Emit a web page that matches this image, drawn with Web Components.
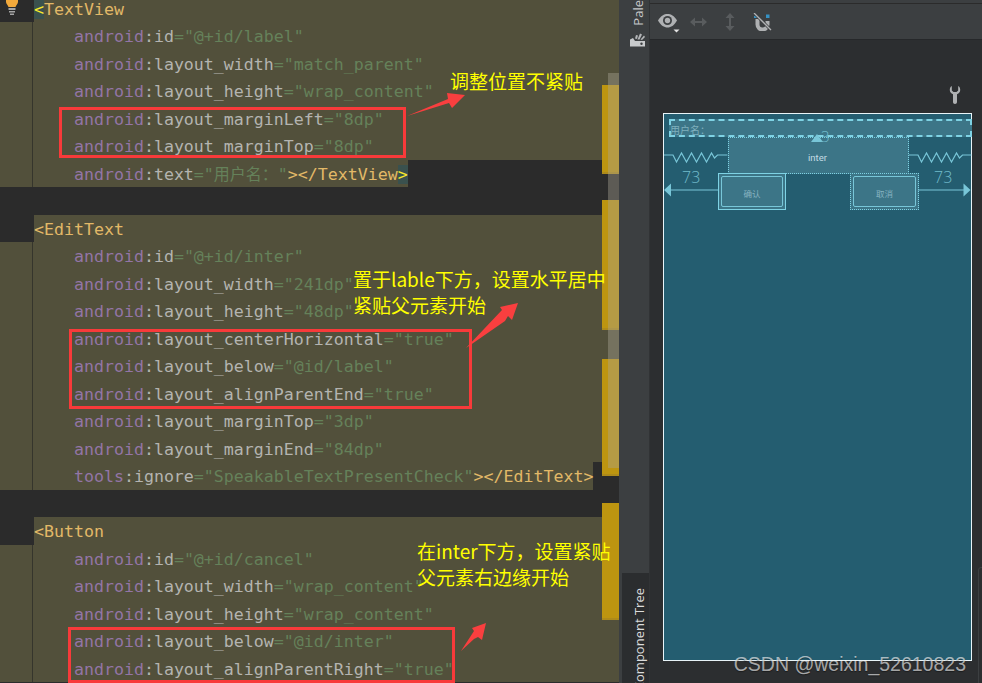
<!DOCTYPE html>
<html lang="zh">
<head>
<meta charset="utf-8">
<title>layout editor</title>
<style>
  html, body { margin: 0; height: 100%; background: #2b2b2b; overflow: hidden; }
</style>
</head>
<body>
<app-shell>
  <code-editor>
    <tag-line name="TextView" match></tag-line>
    <code-line ns="android" name="id" value="@+id/label"></code-line>
    <code-line ns="android" name="layout_width" value="match_parent"></code-line>
    <code-line ns="android" name="layout_height" value="wrap_content"></code-line>
    <code-line ns="android" name="layout_marginLeft" value="8dp"></code-line>
    <code-line ns="android" name="layout_marginTop" value="8dp"></code-line>
    <code-line ns="android" name="text" value="用户名&#xFF1A;" close="TextView" match></code-line>
    <blank-line></blank-line>
    <tag-line name="EditText"></tag-line>
    <code-line ns="android" name="id" value="@+id/inter"></code-line>
    <code-line ns="android" name="layout_width" value="241dp"></code-line>
    <code-line ns="android" name="layout_height" value="48dp"></code-line>
    <code-line ns="android" name="layout_centerHorizontal" value="true"></code-line>
    <code-line ns="android" name="layout_below" value="@id/label"></code-line>
    <code-line ns="android" name="layout_alignParentEnd" value="true"></code-line>
    <code-line ns="android" name="layout_marginTop" value="3dp"></code-line>
    <code-line ns="android" name="layout_marginEnd" value="84dp"></code-line>
    <code-line ns="tools" name="ignore" value="SpeakableTextPresentCheck" close="EditText"></code-line>
    <blank-line></blank-line>
    <tag-line name="Button"></tag-line>
    <code-line ns="android" name="id" value="@+id/cancel"></code-line>
    <code-line ns="android" name="layout_width" value="wrap_content"></code-line>
    <code-line ns="android" name="layout_height" value="wrap_content"></code-line>
    <code-line ns="android" name="layout_below" value="@id/inter"></code-line>
    <code-line ns="android" name="layout_alignParentRight" value="true"></code-line>
  </code-editor>
  <tool-strip></tool-strip>
  <design-panel></design-panel>
  <call-outs></call-outs>
</app-shell>

<script>
  const rowCss = `
    :host {
      display: flex;
      height: 27.5px;
      font: 16.6px/30.5px "DejaVu Sans Mono", "Liberation Mono", monospace;
      white-space: pre;
      color: #b4b4b0;
    }
    .gutter { flex: 0 0 34px; box-sizing: border-box; }
    .gutter.lit { background: #52503b; position: relative; }
    .gutter.lit::after {
      content: ""; position: absolute; left: 32px; top: 0; bottom: 0; width: 1px; background: #35352c;
    }
    .code { flex: 1; background: #52503b; min-width: 0; }
    .code.fit { flex: none; }
    .ns { color: #9275a6; }
    .str { color: #65815a; }
    .tag { color: #e2b968; }
    .match { color: #f7e82c; background: #3a514e; }
    .cjk { font: 16px "Noto Sans CJK SC", sans-serif; }
  `;

  class TagLine extends HTMLElement {
    connectedCallback() {
      const open = this.hasAttribute('match')
        ? '<span class="match">&lt;</span>'
        : '<span class="tag">&lt;</span>';
      this.attachShadow({ mode: 'open' }).innerHTML = `
        <style>${rowCss}</style>
        <div class="gutter"></div>
        <div class="code">${open}<span class="tag">${this.getAttribute('name')}</span></div>`;
    }
  }
  customElements.define('tag-line', TagLine);

  class CodeLine extends HTMLElement {
    connectedCallback() {
      const value = this.getAttribute('value').replace(/[^\x00-\x7f]+/g, m => `<span class="cjk">${m}</span>`);
      const close = this.getAttribute('close');
      let tail = '';
      if (close) {
        tail = this.hasAttribute('match')
          ? `<span class="tag">&gt;&lt;/${close}</span><span class="match">&gt;</span>`
          : `<span class="tag">&gt;&lt;/${close}&gt;</span>`;
      }
      this.attachShadow({ mode: 'open' }).innerHTML = `
        <style>${rowCss}</style>
        <div class="gutter lit"></div>
        <div class="code ${close ? 'fit' : ''}">${'    '}<span class="ns">${this.getAttribute('ns')}</span>:${this.getAttribute('name')}<span class="str">="${value}"</span>${tail}</div>`;
    }
  }
  customElements.define('code-line', CodeLine);

  class BlankLine extends HTMLElement {
    constructor() {
      super();
      this.attachShadow({ mode: 'open' }).innerHTML = `<style>:host { display: block; height: 27.5px; }</style>`;
    }
  }
  customElements.define('blank-line', BlankLine);

  class ScrollMarks extends HTMLElement {
    constructor() {
      super();
      this.attachShadow({ mode: 'open' }).innerHTML = `
        <style>
          :host { position: absolute; left: 602px; top: 0; width: 17px; height: 683px; display: block; }
          .mark { position: absolute; left: 0; right: 0; background: #bd9510; box-shadow: inset 0 -2px 0 #ad8a1a; }
          .thumb { position: absolute; left: 6px; right: 0; top: 73px; height: 395px; background: rgba(170, 165, 150, .4); }
        </style>
        <div class="mark" style="top:85px;height:89px"></div>
        <div class="mark" style="top:200px;height:130px"></div>
        <div class="mark" style="top:359px;height:117px"></div>
        <div class="mark" style="top:503px;height:117px"></div>
        <div class="thumb"></div>`;
    }
  }
  customElements.define('scroll-marks', ScrollMarks);

  class CodeEditor extends HTMLElement {
    constructor() {
      super();
      this.attachShadow({ mode: 'open' }).innerHTML = `
        <style>
          :host { display: block; flex: 0 0 619px; position: relative; overflow: hidden; background: #2b2b2b; }
          .lines { display: flex; flex-direction: column; margin-top: -5.5px; }
        </style>
        <div class="lines"><slot></slot></div>
        <scroll-marks></scroll-marks>
        <svg width="24" height="18" viewBox="0 0 24 18" style="position:absolute;left:0;top:0">
          <path d="M6 -3h12v5c0 2-2 3-2.500 5h-7c-.5-2-2.500-3-2.500-5z" fill="#f2a93b"/>
          <path d="M8.500 8h7v2h-7zM9 11h6v1.500H9zM10 13.500h4V15h-4z" fill="#a5a5a5"/>
        </svg>`;
    }
  }
  customElements.define('code-editor', CodeEditor);

  class ToolStrip extends HTMLElement {
    constructor() {
      super();
      this.attachShadow({ mode: 'open' }).innerHTML = `
        <style>
          :host {
            display: flex; flex-direction: column; justify-content: space-between;
            flex: 0 0 31px; width: 31px; min-width: 0; box-sizing: border-box; background: #3c3f41; border-right: 1px solid #313335;
            font: 13px "Open Sans", "Liberation Sans", sans-serif; color: #c4c6c8;
          }
          .side { writing-mode: vertical-rl; transform: rotate(180deg); line-height: 14px; white-space: nowrap; }
          .palette { display: flex; flex-direction: column; align-items: center; padding-left: 7px; }
          .palette .clip { height: 26px; overflow: hidden; display: flex; align-items: flex-start; }
          .palette svg { margin-top: 6px; }
          .tree { margin-left: 3px; height: 110px; background: #2b2d2f; overflow: hidden; padding: 15px 0 0 10px; box-sizing: border-box; }
          .tree .side { display: block; color: #dcdcdc; }
        </style>
        <div class="palette">
          <div class="clip"><span class="side">Pale</span></div>
          <svg width="15" height="15" viewBox="0 0 15 15">
            <path d="M0 7.500l3-1.500 2 3h10v5.500H0z" fill="#c8cacc"/>
            <path d="M5 6.500L6 3l2 .6-1 3.400zM7.500 7.500L10 1.500l2 1-2.500 5zM10.500 7.500L14 3.500l1 1.500-3 3z" fill="#b4b6b8"/>
            <circle cx="11.500" cy="11.800" r="1.200" fill="#3c3f41"/>
          </svg>
        </div>
        <div class="tree"><span class="side">Component Tree</span></div>`;
    }
  }
  customElements.define('tool-strip', ToolStrip);

  class DesignToolbar extends HTMLElement {
    constructor() {
      super();
      this.attachShadow({ mode: 'open' }).innerHTML = `
        <style>
          :host {
            display: flex; align-items: center; gap: 14px; height: 35px; margin-top: 3px; padding-left: 8px;
            background: #3c3f41; border-top: 1px solid #2b2b2b; border-bottom: 1px solid #26282a;
            box-shadow: 0 -3px 0 #3c3f41;
          }
          svg { display: block; flex: none; }
        </style>
        <svg width="24" height="22" viewBox="0 0 24 22">
          <path d="M0 9.500C3 4.500 6 3 9.500 3S16 4.500 19 9.500C16 14.500 13 16.500 9.500 16.500S3 14.500 0 9.500z" fill="#afb1b3"/>
          <circle cx="9.500" cy="9.500" r="4.500" fill="#3c3f41"/>
          <circle cx="9.500" cy="9.500" r="2.700" fill="#afb1b3"/>
          <path d="M15.500 18.500h6l-3 3z" fill="#e4e4e4"/>
        </svg>
        <svg style="margin-left:-6px" width="17" height="10" viewBox="0 0 17 10">
          <path d="M0 5l5-4.500V4h7V.5L17 5l-5 4.500V6H5v3.500z" fill="#595c5e"/>
        </svg>
        <svg style="margin-left:4px" width="10" height="18" viewBox="0 0 10 18">
          <path d="M5 0l4.500 5H6v8h3.500L5 18 .5 13H4V5H.5z" fill="#595c5e"/>
        </svg>
        <svg style="margin-left:4px" width="19" height="18" viewBox="0 0 19 18">
          <path d="M4.500 6v5.500a5 5 0 0 0 10 0V8" fill="none" stroke="#afb1b3" stroke-width="4"/>
          <rect x="13" y="1.500" width="3.500" height="3.500" fill="#3592c4"/>
          <rect x="1" y="3" width="3" height="2" fill="#3592c4"/>
          <path d="M1 0l17 17" stroke="#3c3f41" stroke-width="3"/>
          <path d="M1 0l17 17" stroke="#b0b2b4" stroke-width="1.300"/>
        </svg>`;
    }
  }
  customElements.define('design-toolbar', DesignToolbar);

  class BlueprintWidget extends HTMLElement {
    constructor() {
      super();
      this.attachShadow({ mode: 'open' }).innerHTML = `
        <style>
          :host {
            position: absolute; display: flex; align-items: center; box-sizing: border-box;
            background: #3c7587; border: 1px dotted #7ed2e4;
            justify-content: center; color: #c3dce4; font: 9.5px "Roboto", "Noto Sans CJK SC", sans-serif;
          }
          :host([solid]), :host([framed]) { padding: 2px; }
          :host([solid]) { border-style: solid; }
          :host([wide]) { border: 2px dashed #7ed2e4; }
          .inner { display: flex; align-items: center; justify-content: center; flex: 1; align-self: stretch; padding: 3px 2px 0 0; }
          :host([solid]) .inner, :host([framed]) .inner {
            border: 1px solid #78c6d8; border-radius: 2px; color: #86b3c1; font-size: 8.5px; padding: 2px 0 0;
          }
        </style>
        <div class="inner"><slot></slot></div>`;
    }
  }
  customElements.define('blueprint-widget', BlueprintWidget);

  class BlueprintView extends HTMLElement {
    constructor() {
      super();
      this.attachShadow({ mode: 'open' }).innerHTML = `
        <style>
          :host {
            display: block; position: absolute; left: 13px; top: 113px; width: 309px; height: 548px;
            box-sizing: border-box; border: 1px solid #e8f4f8; background: #245d70;
          }
          svg { position: absolute; left: -1px; top: -1px; overflow: visible; }
          text { font: 300 16px "Open Sans", "Liberation Sans", sans-serif; fill: #72bccc; }
          .label-text {
            position: absolute; left: 6px; top: 8px; font: 10px "Noto Sans CJK SC", sans-serif; color: #7fb0bd;
          }
        </style>
        <blueprint-widget wide style="left:5px;top:5px;width:303px;height:18px"></blueprint-widget>
        <span class="label-text">用户名&#xFF1A;</span>
        <blueprint-widget style="left:64px;top:23px;width:181px;height:37px">inter</blueprint-widget>
        <blueprint-widget solid style="left:54px;top:59px;width:68px;height:37px">确认</blueprint-widget>
        <blueprint-widget framed style="left:186px;top:59px;width:69px;height:37px">取消</blueprint-widget>
        <svg width="309" height="548" viewBox="0 0 309 548" fill="none" stroke="#78c6d8" stroke-width="1.200">
          <path d="M1 42h9l3.500 7 5-9 5 9 5-9 5 9 5-9 5 9 5-9 3 5 3-3h10"/>
          <path d="M246 42h9l3.500 7 5-9 5 9 5-9 5 9 5-9 5 9 5-9 3 5 3-3h9"/>
          <path d="M8 77h47M255 77h46"/>
          <path d="M1 77l7-6.500v13zM307.500 77l-7-6.500v13z" fill="#78c6d8" stroke="none"/>
          <path d="M154 21l6 8h-12z" fill="#78c6d8" stroke="none"/>
          <text x="19" y="70" stroke="none">73</text>
          <text x="271" y="70" stroke="none">73</text>
          <text x="158" y="29" stroke="none" style="font-size:15px">3</text>
        </svg>`;
    }
  }
  customElements.define('blueprint-view', BlueprintView);

  class DesignPanel extends HTMLElement {
    constructor() {
      super();
      this.attachShadow({ mode: 'open' }).innerHTML = `
        <style>
          :host { display: block; flex: 1; position: relative; background: #2c2e30; overflow: hidden; }
          .wrench { position: absolute; left: 299px; top: 86px; }
          .edge {
            position: absolute; left: 328px; top: 567px; width: 10px; height: 130px;
            border: 1px solid #3c3f41; border-radius: 3px; box-sizing: border-box;
          }
        </style>
        <design-toolbar></design-toolbar>
        <svg class="wrench" width="12" height="18" viewBox="0 0 12 18">
          <path d="M2.800 0C1.200 1 .8 2.500.8 4c0 2 1.200 3.500 3.200 4.200V16c0 1 .8 2 2 2s2-1 2-2V8.200c2-.7 3.200-2.200 3.200-4.200 0-1.500-.4-3-2-4v4.500L7.500 6h-3L2.800 4.500z" fill="#afb1b3"/>
        </svg>
        <blueprint-view></blueprint-view>
        <div class="edge"></div>`;
    }
  }
  customElements.define('design-panel', DesignPanel);

  class NoteLabel extends HTMLElement {
    constructor() {
      super();
      this.attachShadow({ mode: 'open' }).innerHTML = `
        <style>
          :host {
            position: absolute; display: block; white-space: nowrap;
            font: 19px/26.500px "Noto Sans CJK SC", sans-serif; color: #ffff00;
          }
        </style>
        <slot></slot>`;
    }
  }
  customElements.define('note-label', NoteLabel);

  class RedBox extends HTMLElement {
    constructor() {
      super();
      this.attachShadow({ mode: 'open' }).innerHTML = `
        <style>:host { position: absolute; display: block; box-sizing: border-box; border: 3px solid #f83a3a; }</style>`;
    }
  }
  customElements.define('red-box', RedBox);

  class CallOuts extends HTMLElement {
    constructor() {
      super();
      this.attachShadow({ mode: 'open' }).innerHTML = `
        <style>
          :host { position: absolute; left: 0; top: 0; width: 982px; height: 683px; display: block; overflow: hidden; }
          svg { position: absolute; left: 0; top: 0; }
          .mark {
            position: absolute; right: 16px; top: 652px; font: 19.500px/24px "Liberation Sans", sans-serif;
            color: rgba(255, 255, 255, .62); text-shadow: 0 1px 1px rgba(0, 0, 0, .4);
          }
        </style>
        <red-box style="left:59px;top:107px;width:347px;height:51px"></red-box>
        <red-box style="left:69px;top:329px;width:403px;height:80px"></red-box>
        <red-box style="left:68px;top:627px;width:387px;height:56px"></red-box>
        <svg width="982" height="683" viewBox="0 0 982 683" fill="#f93f3f">
          <path d="M407 116l41-17-1-6 18 2-13 13-3-5z"/>
          <path d="M466 348l36-38-2-3 18-4-6 17-4-4-3 5z"/>
          <path d="M461 651l13-20-2-3 14-5-4 17-4-3-4 2z"/>
        </svg>
        <note-label style="left:450px;top:67.500px">调整位置不紧贴</note-label>
        <note-label style="left:353px;top:265.500px">置于lable下方&#xFF0C;设置水平居中<br>紧贴父元素开始</note-label>
        <note-label style="left:417px;top:537.500px">在inter下方&#xFF0C;设置紧贴<br>父元素右边缘开始</note-label>
        <div class="mark">CSDN @weixin_52610823</div>`;
    }
  }
  customElements.define('call-outs', CallOuts);

  class AppShell extends HTMLElement {
    constructor() {
      super();
      this.attachShadow({ mode: 'open' }).innerHTML = `
        <style>
          :host { display: flex; position: relative; width: 982px; height: 683px; overflow: hidden; }
        </style>
        <slot></slot>`;
    }
  }
  customElements.define('app-shell', AppShell);
</script>
</body>
</html>
